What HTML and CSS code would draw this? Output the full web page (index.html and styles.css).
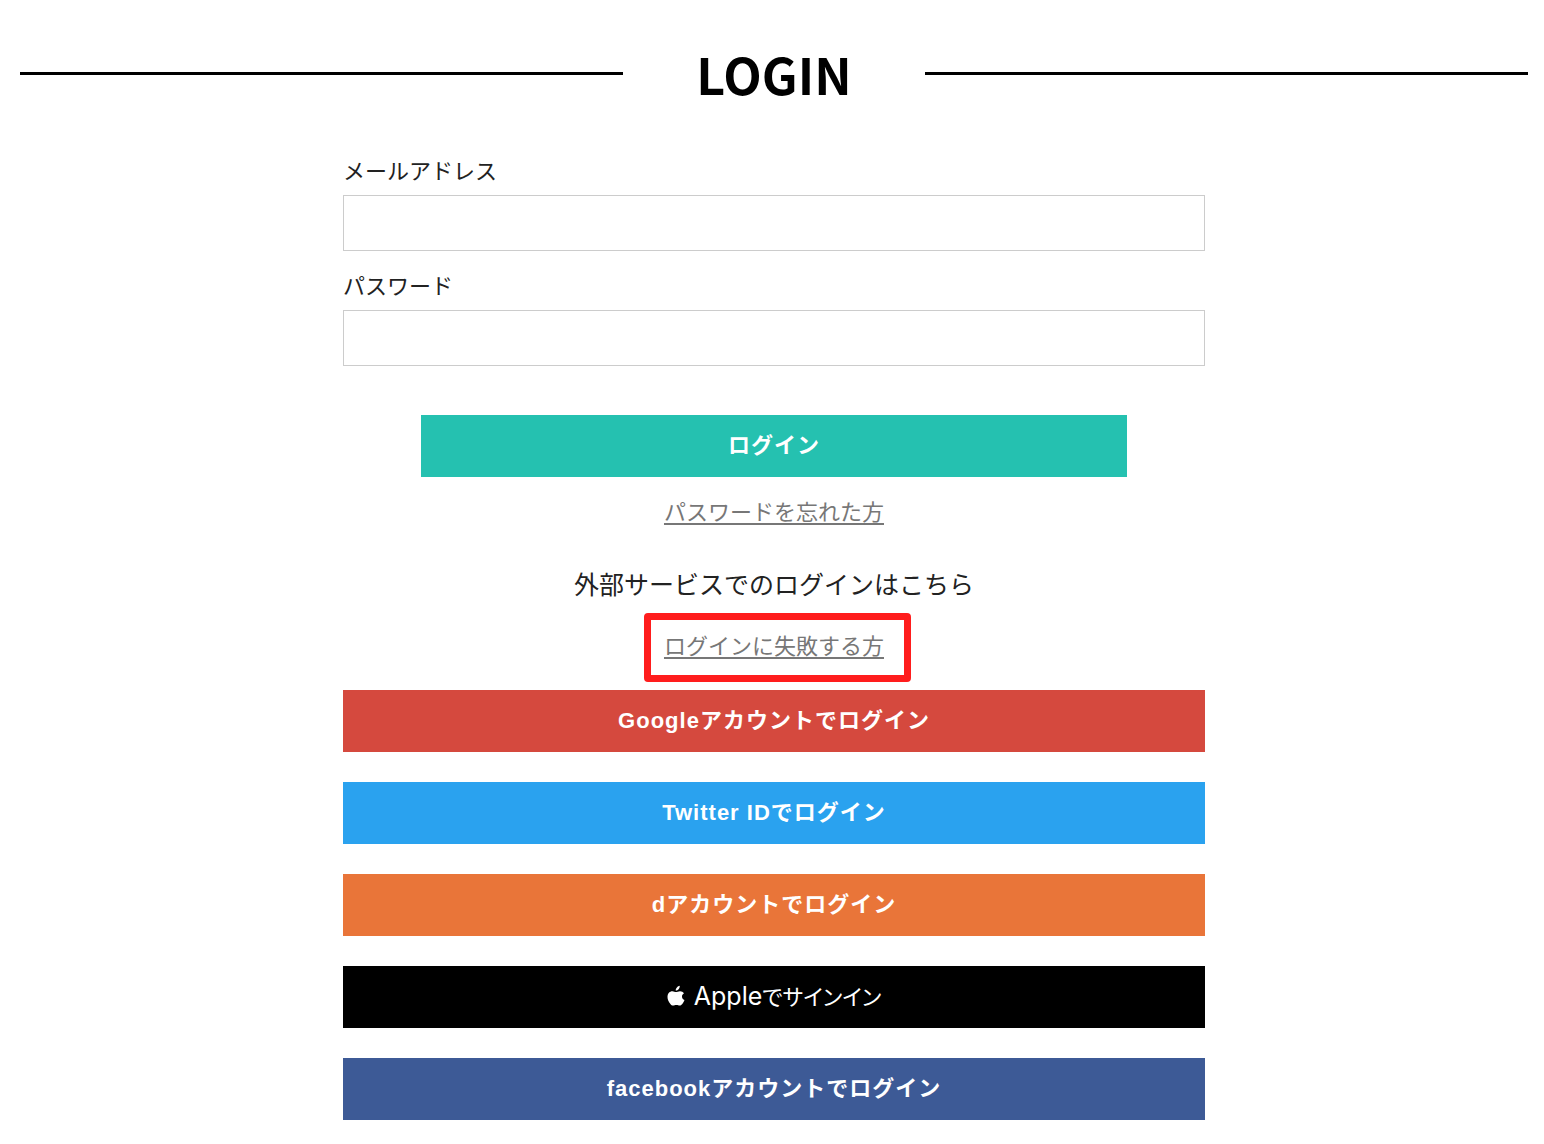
FILE: index.html
```html
<!DOCTYPE html>
<html lang="ja">
<head>
<meta charset="utf-8">
<meta name="viewport" content="width=device-width, initial-scale=1">
<title>LOGIN</title>
<link rel="stylesheet" href="styles.css">
</head>
<body>
<header class="page-header">
  <h1 class="page-title">LOGIN</h1>
</header>
<main class="login">
  <form class="login-form">
    <label class="field-label" for="email">メールアドレス</label>
    <input class="field-input" id="email" type="email">
    <label class="field-label" for="password">パスワード</label>
    <input class="field-input" id="password" type="password">
    <button class="button button-login" type="submit">ログイン</button>
  </form>
  <a class="help-link" href="#forgot">パスワードを忘れた方</a>
  <h2 class="external-title">外部サービスでのログインはこちら</h2>
  <div class="highlight"><a class="help-link" href="#trouble">ログインに失敗する方</a></div>
  <div class="providers">
    <button class="button button-google" type="button">Googleアカウントでログイン</button>
    <button class="button button-twitter" type="button">Twitter IDでログイン</button>
    <button class="button button-docomo" type="button">dアカウントでログイン</button>
    <button class="button button-apple" type="button">
      <svg class="apple-icon" viewBox="0 0 18 22" aria-hidden="true"><path d="M12.700 .8c.2 1.300-.3 2.500-1.100 3.400-.8.900-1.900 1.400-2.900 1.300-.1-1.200.4-2.300 1.200-3.100.8-.9 1.900-1.500 2.800-1.600zM17 8.200c-1.300.8-2 1.900-2 3.300 0 1.700 1 3 2.500 3.600-.5 1.500-1.200 2.800-2.200 4-.7.900-1.500 1.500-2.600 1.500-1.200 0-1.700-.6-3.300-.6s-2.100.6-3.300.6c-1.100 0-1.900-.7-2.700-1.700C1.500 16.900.5 14.400.5 12c0-3.600 2.300-5.700 4.900-5.700 1.400 0 2.600.8 3.600.8.900 0 2.300-.9 4-.9 1.600 0 3.100.7 4 2z"/></svg>
      <span>Apple<span class="apple-label-ja">でサインイン</span></span>
    </button>
    <button class="button button-facebook" type="button">facebookアカウントでログイン</button>
  </div>
</main>
</body>
</html>
```
FILE: styles.css
```css
* { box-sizing: border-box; }

body {
  margin: 0;
  padding: 39px 16px 24px 20px;
  background: #fff;
  color: #222;
  font-family: "Liberation Sans", "Noto Sans CJK JP", sans-serif;
  font-size: 22px;
}

.page-title {
  display: flex;
  align-items: center;
  justify-content: space-between;
  margin: 0;
  color: #000;
  font-family: "Noto Sans CJK JP", sans-serif;
  font-size: 50px;
  font-weight: 700;
  line-height: 68px;
}

.page-title::before,
.page-title::after {
  content: "";
  width: 40%;
  height: 3px;
  background: #000;
}

.login {
  display: flex;
  flex-direction: column;
  align-items: center;
  width: 58%;
  max-width: 862px;
  min-width: 320px;
  margin: 49px auto 0;
}

.login-form {
  display: flex;
  flex-direction: column;
  width: 100%;
}

.field-label {
  line-height: 32px;
  margin-bottom: 7px;
}

.field-input {
  width: 100%;
  height: 56px;
  margin-bottom: 20px;
  padding: 0 12px;
  border: 1px solid #ccc;
  border-radius: 0;
  background: #fff;
  font: inherit;
}

.button {
  display: flex;
  align-items: center;
  justify-content: center;
  width: 100%;
  height: 62px;
  padding: 0 12px 7px;
  border: 0;
  color: #fff;
  font-family: inherit;
  font-size: 22px;
  font-weight: 700;
  letter-spacing: 1px;
  cursor: pointer;
}

.button-login {
  align-self: center;
  width: 82%;
  margin: 29px 0 20px;
  background: #25c1b0;
}

.help-link {
  color: #777;
  line-height: 32px;
  text-underline-offset: 3px;
}

.external-title {
  margin: 36px 0 26px;
  font-size: 25px;
  font-weight: 400;
  line-height: 40px;
}

.highlight {
  position: relative;
  line-height: 32px;
}

/* red frame drawn around the link */
.highlight::after {
  content: "";
  position: absolute;
  inset: -18px -27px -19px -20px;
  border: 7px solid #ff1d1d;
  border-radius: 4px;
  pointer-events: none;
}

.providers {
  display: grid;
  gap: 30px;
  width: 100%;
  margin-top: 27px;
}

.button-google { background: #d5493e; }
.button-twitter { background: #2aa2ef; }
.button-docomo { background: #e97539; }
.button-facebook { background: #3d5a96; }

.button-apple {
  gap: 9px;
  padding-bottom: 2px;
  background: #000;
  font-family: Inter, "Noto Sans CJK JP", sans-serif;
  font-size: 25px;
  font-weight: 400;
  font-feature-settings: "palt";
  line-height: 32px;
  letter-spacing: 0;
}

.apple-label-ja {
  font-size: 22px;
}

.apple-icon {
  width: 18px;
  height: 22px;
  fill: currentColor;
}
```
